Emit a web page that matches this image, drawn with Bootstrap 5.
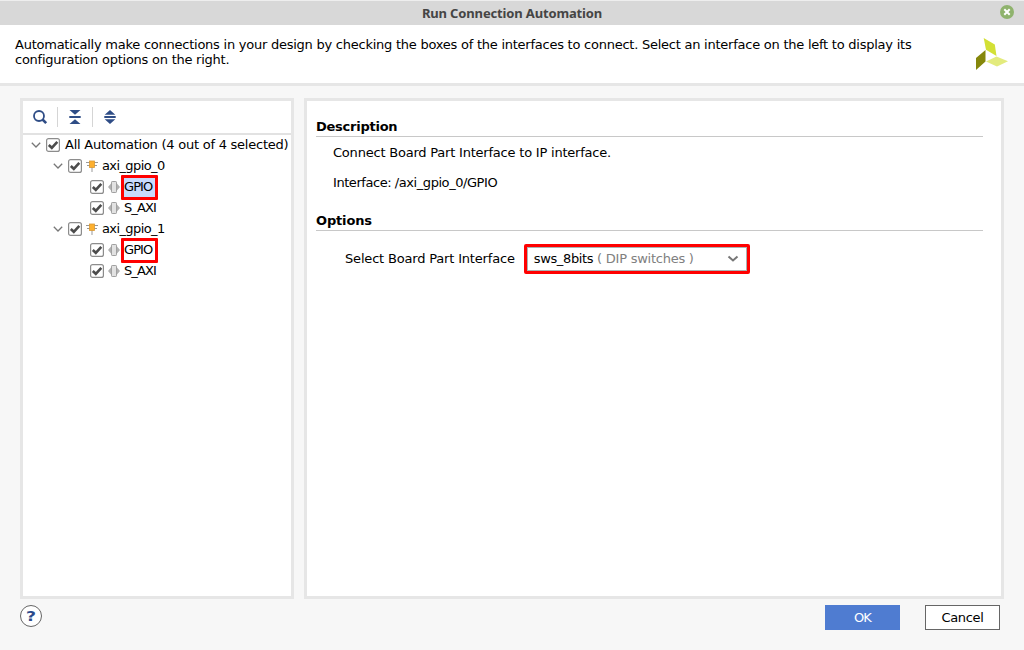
<!DOCTYPE html>
<html lang="en">
<head>
<meta charset="utf-8">
<meta name="viewport" content="width=device-width, initial-scale=1">
<title>Run Connection Automation</title>
<link href="https://cdn.jsdelivr.net/npm/bootstrap@5.3.0/dist/css/bootstrap.min.css" rel="stylesheet">
<style>
body{font:13px/15px "DejaVu Sans",sans-serif;color:#000;background:#f7f7f7;height:650px;overflow:hidden}
svg{display:block;flex:none}
.titlebar{height:25px;background:#d8d8d8;border-top:1px solid #eee;font:bold 13px/24px "Noto Sans",sans-serif;letter-spacing:-.15px;color:#454545}
.titlebar svg{right:9px;top:3px}
.intro{height:61px;border-bottom:3px solid #e6e6e6;padding:12px 16px 0 15px;letter-spacing:-.243px}
.panes{padding:12px 20px 0;height:513px;gap:10px}
.pane{border:3px solid #e6e6e6;background:#fff}
.tree-pane{width:274px}
.tools{height:34px;border-bottom:2px solid #e2e2e2;padding-left:9px;margin-bottom:-1px}
.sep{width:1px;height:20px;background:#d5d5d5;margin:0 9px}
.node{height:21px;white-space:nowrap;padding-left:7px;letter-spacing:-.6px}
.node.l0{letter-spacing:-.24px}
.node.l1{padding-left:29px}
.node.l2{padding-left:67px;letter-spacing:-.9px}
.node .caret{margin-right:4px}
.node .kind,.node .name{margin-left:4px}
.node.l0 .name{margin-left:5px}
.hot{border:3px solid red;border-radius:1px;height:25px;width:37px;margin-left:1px;line-height:18px;position:relative;top:1px}
.hot.sel{background:#c8dafc}
.details{padding:18px 18px 0 9px}
.sect{font-size:13px;line-height:15px;font-weight:bold;height:18px;border-bottom:1px solid #c8c8c8;margin:0;letter-spacing:-.25px}
.sect.opts{margin-top:23px;letter-spacing:-.15px}
.about{padding:8px 0 0 17px;letter-spacing:-.21px}
.about .path{letter-spacing:-.44px}
.choice{padding:13px 0 0 29px;letter-spacing:-.18px}
.choice label{position:relative;top:-1px}
.combo{width:226px;height:30px;border:3px solid red;border-radius:2px;margin-left:9px;padding:0 8px 2px 7px;background:#fff;box-shadow:inset 0 0 0 1px #a9b3b3;letter-spacing:-.35px}
.combo .hint{color:#808080;letter-spacing:-.24px}
.foot{padding:6px 24px 0 20px}
.dlg{width:75px;height:25px;padding:0;border-radius:0;font-size:13px;line-height:23px;letter-spacing:-.3px;border:1px solid #666;background:#fff;color:#000}
.dlg.ok{background:#4f7cd1;border-color:#4f7cd1;color:#fff;letter-spacing:-1px}
.help{width:22px;height:22px;border:1px solid #666;background:#fff}
</style>
</head>
<body>
<svg width="0" height="0" class="position-absolute">
<defs>
<symbol id="caret" viewBox="0 0 12 12"><path d="M1.800 3.800 6 8l4.200-4.200" fill="none" stroke="#777" stroke-width="1.300"/></symbol>
<symbol id="check" viewBox="0 0 14 14"><rect x=".6" y=".6" width="12.800" height="12.800" rx="2" fill="#fff" stroke="#8c8c8c" stroke-width="1.200"/><path d="M2.800 7 5.800 9.800 11.300 3.800" fill="none" stroke="#4c4c4c" stroke-width="2.600"/></symbol>
<symbol id="chip" viewBox="0 0 12 12"><path d="M0 2.500h12M1 5.500h10M6 7v5" stroke="#999" stroke-width="1"/><rect x="3.500" y="1" width="5" height="6.500" fill="#fdb030" stroke="#d99a35" stroke-width=".8"/></symbol>
<symbol id="port" viewBox="0 0 12 12"><path d="M3 2.500 0 6l3 3.500zM9 2.500 12 6 9 9.500z" fill="#b0b0b0"/><rect x="3.500" y=".5" width="5" height="11" rx=".7" fill="#e2e2e2" stroke="#a0a0a0"/></symbol>
</defs>
</svg>
<header class="titlebar position-relative text-center">
<span>Run Connection Automation</span>
<svg class="position-absolute" width="16" height="16" viewBox="0 0 16 16"><circle cx="8" cy="8" r="7" fill="#8fb36d"/><path d="m5.300 5.300 5.400 5.400m0-5.400-5.400 5.400" stroke="#fff" stroke-width="2"/></svg>
</header>
<section class="intro bg-white d-flex justify-content-between">
<div>Automatically make connections in your design by checking the boxes of the interfaces to connect. Select an interface on the left to display its<br>configuration options on the right.</div>
<svg width="32" height="33" viewBox="0 0 32 33"><path d="M7.700 1 18.800 7.500 20.500 19 10 12.700z" fill="#d3e035"/><path d="M0 21 9.500 13v11.500L0 33z" fill="#85870b"/><path d="m10 24.500 10.500-5L32 24.300 21 29.500z" fill="#e3eb7d"/></svg>
</section>
<main class="panes d-flex">
<aside class="pane tree-pane">
<div class="tools d-flex align-items-center">
<svg width="16" height="16" viewBox="0 0 16 16"><circle cx="7" cy="7" r="5" fill="none" stroke="#2f4d86" stroke-width="1.800"/><path d="m10.500 10.500 3.700 3.700" stroke="#2f4d86" stroke-width="2.600"/></svg>
<div class="sep"></div>
<svg width="16" height="16" viewBox="0 0 16 16"><path d="M2.500 1h11L8 5.700zM2.500 15h11L8 10.300zM2.300 7h11.400v2H2.300z" fill="#2f4d86"/></svg>
<div class="sep"></div>
<svg width="16" height="16" viewBox="0 0 16 16"><path d="M2.700 5.700h10.600L8 1zM2.700 10.300h10.600L8 15zM2.300 7.100h11.400v1.800H2.300z" fill="#2f4d86"/></svg>
</div>
<div class="node l0 d-flex align-items-center"><svg class="caret" width="12" height="12"><use href="#caret"/></svg><svg width="14" height="14"><use href="#check"/></svg><span class="name">All Automation (4 out of 4 selected)</span></div>
<div class="node l1 d-flex align-items-center"><svg class="caret" width="12" height="12"><use href="#caret"/></svg><svg width="14" height="14"><use href="#check"/></svg><svg class="kind" width="12" height="12"><use href="#chip"/></svg><span class="name">axi_gpio_0</span></div>
<div class="node l2 d-flex align-items-center"><svg width="14" height="14"><use href="#check"/></svg><svg class="kind" width="12" height="12"><use href="#port"/></svg><span class="hot sel">GPIO</span></div>
<div class="node l2 d-flex align-items-center"><svg width="14" height="14"><use href="#check"/></svg><svg class="kind" width="12" height="12"><use href="#port"/></svg><span class="name">S_AXI</span></div>
<div class="node l1 d-flex align-items-center"><svg class="caret" width="12" height="12"><use href="#caret"/></svg><svg width="14" height="14"><use href="#check"/></svg><svg class="kind" width="12" height="12"><use href="#chip"/></svg><span class="name">axi_gpio_1</span></div>
<div class="node l2 d-flex align-items-center"><svg width="14" height="14"><use href="#check"/></svg><svg class="kind" width="12" height="12"><use href="#port"/></svg><span class="hot">GPIO</span></div>
<div class="node l2 d-flex align-items-center"><svg width="14" height="14"><use href="#check"/></svg><svg class="kind" width="12" height="12"><use href="#port"/></svg><span class="name">S_AXI</span></div>
</aside>
<section class="pane details flex-grow-1">
<h2 class="sect">Description</h2>
<p class="about mb-0">Connect Board Part Interface to IP interface.<br><br><span class="path">Interface: /axi_gpio_0/GPIO</span></p>
<h2 class="sect opts">Options</h2>
<div class="choice d-flex align-items-center">
<label>Select Board Part Interface</label>
<div class="combo d-flex align-items-center justify-content-between"><span>sws_8bits <span class="hint">( DIP switches )</span></span><svg width="12" height="12" viewBox="0 0 12 12"><path d="m1.500 4.500 4.500 4 4.500-4" fill="none" stroke="#777" stroke-width="2"/></svg></div>
</div>
</section>
</main>
<footer class="foot d-flex align-items-start">
<div class="help rounded-circle d-flex justify-content-center"><svg width="20" height="20" viewBox="0 0 20 20"><text x="10" y="15.200" text-anchor="middle" font-family="DejaVu Sans" font-weight="bold" font-size="14" fill="#2b4a8b" textLength="10" lengthAdjust="spacingAndGlyphs">?</text></svg></div>
<button class="btn dlg ok ms-auto">OK</button>
<button class="btn dlg" style="margin-left:25px">Cancel</button>
</footer>
<script src="https://cdn.jsdelivr.net/npm/bootstrap@5.3.0/dist/js/bootstrap.bundle.min.js"></script>
</body>
</html>
